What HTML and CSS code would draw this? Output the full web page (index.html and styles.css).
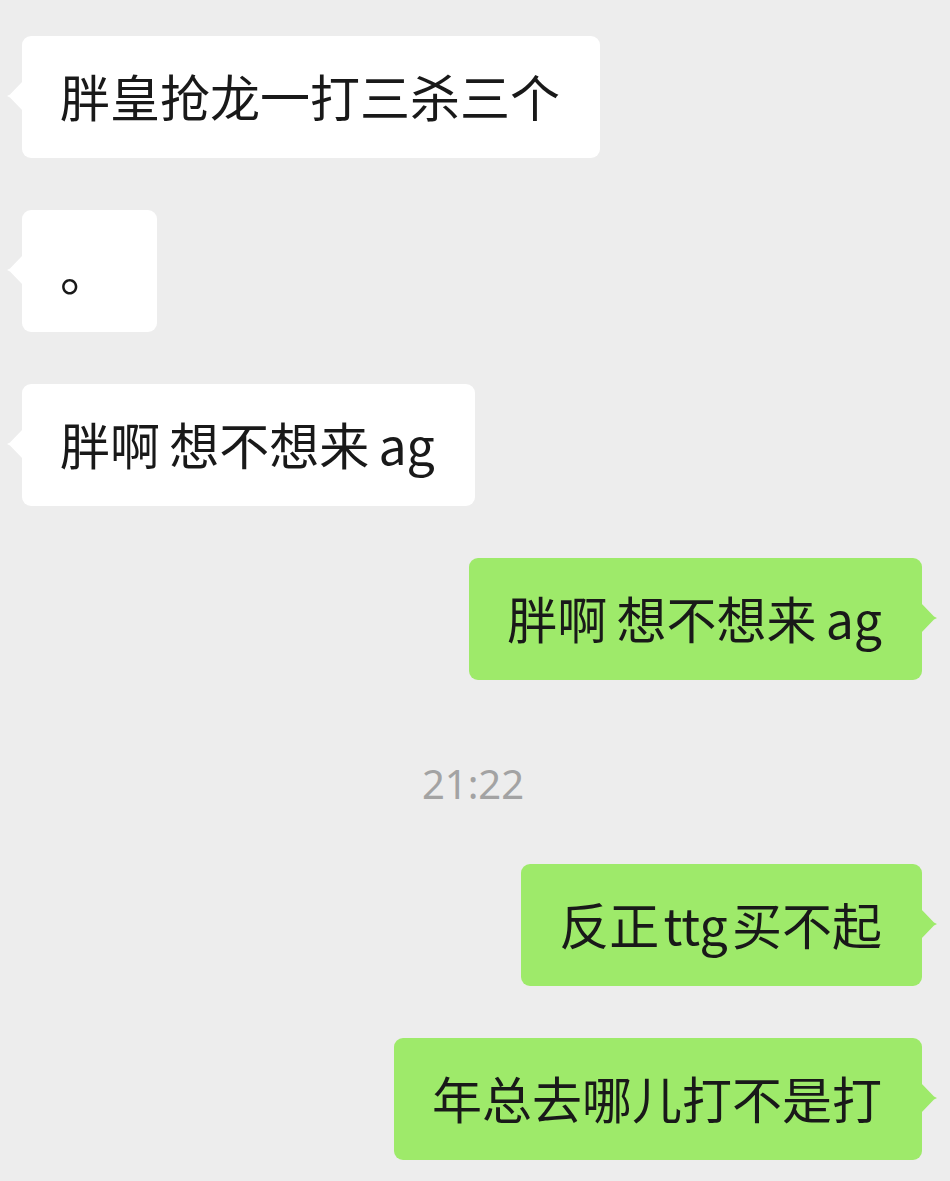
FILE: index.html
```html
<!DOCTYPE html>
<html lang="zh-CN">
<head>
<meta charset="utf-8">
<title>Chat</title>
<link rel="stylesheet" href="styles.css">
</head>
<body>
<div class="chat">
  <div class="row left"><div class="bubble in">胖皇抢龙一打三杀三个</div></div>
  <div class="row left"><div class="bubble in">。</div></div>
  <div class="row left"><div class="bubble in tight">胖啊 想不想来 ag</div></div>
  <div class="row right"><div class="bubble out tight">胖啊 想不想来 ag</div></div>
  <div class="time">21:22</div>
  <div class="row right"><div class="bubble out tighter">反正 ttg 买不起</div></div>
  <div class="row right"><div class="bubble out">年总去哪儿打不是打</div></div>
</div>
</body>
</html>
```

FILE: styles.css
```css
html, body {
  margin: 0;
  padding: 0;
  background: #ededed;
}
body {
  font-family: "Noto Sans CJK SC", "Noto Sans", sans-serif;
  color: #191919;
}
.chat {
  display: flex;
  flex-direction: column;
  gap: 52px;
  padding: 36px 28px 0 22px;
}
.row {
  display: flex;
}
.row.left { justify-content: flex-start; }
.row.right { justify-content: flex-end; }
.bubble {
  position: relative;
  font-size: 50px;
  line-height: 70px;
  padding: 24px 40px 28px 38px;
  border-radius: 9px;
  min-width: 57px;
  white-space: nowrap;
}
.bubble.tight { word-spacing: -2px; }
.bubble.tighter { word-spacing: -7px; }
.bubble.in { background: #ffffff; }
.bubble.out { background: #9eea6a; }
.bubble::before {
  content: "";
  position: absolute;
  top: 45px;
  width: 16px;
  height: 30px;
  background: inherit;
}
.bubble.in::before {
  left: -15px;
  clip-path: polygon(100% 0, 3px 45%, 0 50%, 3px 55%, 100% 100%);
}
.bubble.out::before {
  right: -15px;
  clip-path: polygon(0 0, 13px 45%, 100% 50%, 13px 55%, 0 100%);
}
.time {
  text-align: center;
  font-family: "Noto Sans", "Noto Sans CJK SC", sans-serif;
  font-size: 40px;
  line-height: 56px;
  padding-top: 24px;
  color: #a3a3a3;
  margin-left: 2px;
}
```
